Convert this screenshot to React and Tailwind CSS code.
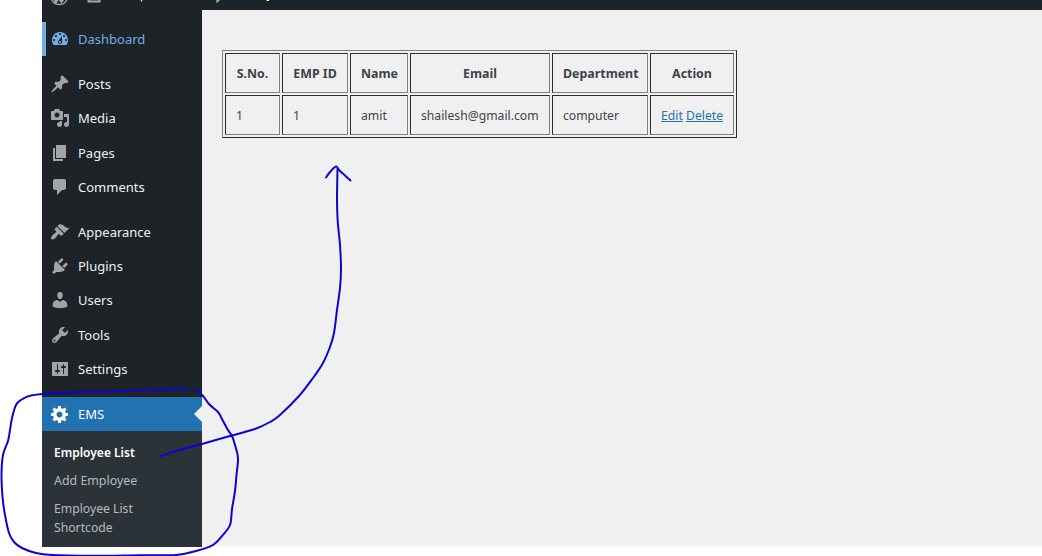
const ICONS = {
  dashboard:
    "M3.76 16h12.48c1.1-1.37 1.76-3.11 1.76-5 0-4.42-3.58-8-8-8s-8 3.58-8 8c0 1.89.66 3.63 1.76 5zM10 4c.55 0 1 .45 1 1s-.45 1-1 1-1-.45-1-1 .45-1 1-1zM6 6c.55 0 1 .45 1 1s-.45 1-1 1-1-.45-1-1 .45-1 1-1zm8 0c.55 0 1 .45 1 1s-.45 1-1 1-1-.45-1-1 .45-1 1-1zm-5.37 5.55L12 7v6c0 1.1-.9 2-2 2s-2-.9-2-2c0-.57.24-1.08.63-1.45zM4 10c.55 0 1 .45 1 1s-.45 1-1 1-1-.45-1-1 .45-1 1-1zm12 0c.55 0 1 .45 1 1s-.45 1-1 1-1-.45-1-1 .45-1 1-1zm-5 3c0-.55-.45-1-1-1s-1 .45-1 1 .45 1 1 1 1-.45 1-1z",
  post: "M10.44 3.02l1.82-1.82 6.36 6.35-1.83 1.82c-1.05-.68-2.48-.57-3.41.36l-.75.75c-.92.93-1.04 2.35-.35 3.41l-1.83 1.82-2.41-2.41-2.8 2.79c-.42.42-3.38 2.71-3.8 2.29s1.86-3.39 2.28-3.81l2.79-2.79L4.1 9.36l1.83-1.82c1.05.69 2.48.57 3.4-.36l.75-.75c.93-.92 1.05-2.35.36-3.41z",
  media:
    "M13 11V4c0-.55-.45-1-1-1h-1.67L9 1H5L3.67 3H2c-.55 0-1 .45-1 1v7c0 .55.45 1 1 1h10c.55 0 1-.45 1-1zM7 4.5c1.38 0 2.5 1.12 2.5 2.5S8.38 9.5 7 9.5 4.5 8.38 4.5 7 5.62 4.5 7 4.5zM14 6h5v10.5c0 1.38-1.12 2.5-2.5 2.5S14 17.88 14 16.5s1.12-2.5 2.5-2.5c.17 0 .34.02.5.05V9h-3V6zm-4 8.05V13h2v3.5c0 1.38-1.12 2.5-2.5 2.5S7 17.88 7 16.5 8.12 14 9.5 14c.17 0 .34.02.5.05z",
  page: "M6 15V2h10v13H6zm-1 1h8v2H3V5h2v11z",
  comments:
    "M5 2h9c1.1 0 2 .9 2 2v7c0 1.1-.9 2-2 2h-2l-5 5v-5H5c-1.1 0-2-.9-2-2V4c0-1.1.9-2 2-2z",
  appearance:
    "M14.48 11.06L7.41 3.99l1.5-1.5c.5-.56 2.3-.47 3.51.32 1.21.8 1.43 1.28 2.91 2.1 1.18.64 2.45 1.26 4.45.85zm-.71.71L6.7 4.7 4.93 6.47c-.39.39-.39 1.02 0 1.41l1.06 1.06c.39.39.39 1.03 0 1.42-.6.6-1.43 1.11-2.21 1.69-.35.26-.7.53-1.01.84C1.43 14.23.4 16.08 1.4 17.07c.99 1 2.84-.03 4.18-1.36.31-.31.58-.66.85-1.02.57-.78 1.08-1.61 1.69-2.21.39-.39 1.02-.39 1.41 0l1.06 1.06c.39.39 1.02.39 1.41 0z",
  plugins:
    "M13.11 4.36L9.87 7.6 8 5.73l3.24-3.24c.35-.34 1.05-.2 1.56.32.52.51.66 1.21.31 1.55zm-8 1.77l.91-1.12 9.01 9.01-1.19.84c-.71.71-2.63 1.16-3.82 1.16H6.14L4.9 17.26c-.59.59-1.54.59-2.12 0-.59-.58-.59-1.53 0-2.12l1.24-1.24v-3.88c0-1.13.4-3.19 1.09-3.89zm7.26 3.97l3.24-3.24c.34-.35 1.04-.21 1.55.31.52.51.66 1.21.31 1.55l-3.24 3.25z",
  users:
    "M10 9.25c-2.27 0-2.73-3.44-2.73-3.44C7 4.02 7.82 2 9.97 2c2.16 0 2.98 2.02 2.71 3.81 0 0-.41 3.44-2.68 3.44zm0 2.57L12.72 10c2.39 0 4.52 2.33 4.52 4.53v2.49s-3.65 1.13-7.24 1.13c-3.65 0-7.24-1.13-7.24-1.13v-2.49c0-2.25 1.94-4.48 4.47-4.48z",
  tools:
    "M16.68 9.77c-1.34 1.34-3.3 1.67-4.95.99l-5.41 6.52c-.99.99-2.59.99-3.58 0s-.99-2.59 0-3.57l6.52-5.42c-.68-1.65-.35-3.61.99-4.95 1.28-1.28 3.12-1.62 4.72-1.06l-2.89 2.89 2.82 2.82 2.86-2.87c.53 1.58.18 3.39-1.08 4.65zM3.81 16.21c.4.39 1.04.39 1.43 0 .4-.4.4-1.04 0-1.43-.39-.4-1.03-.4-1.43 0-.39.39-.39 1.03 0 1.43z",
  settings:
    "M18 16V4c0-.55-.45-1-1-1H3c-.55 0-1 .45-1 1v12c0 .55.45 1 1 1h14c.55 0 1-.45 1-1zM8 11h1c.55 0 1 .45 1 1s-.45 1-1 1H8v1.5c0 .28-.22.5-.5.5s-.5-.22-.5-.5V13H6c-.55 0-1-.45-1-1s.45-1 1-1h1V5.5c0-.28.22-.5.5-.5s.5.22.5.5V11zm5-2h-1c-.55 0-1-.45-1-1s.45-1 1-1h1V5.5c0-.28.22-.5.5-.5s.5.22.5.5V7h1c.55 0 1 .45 1 1s-.45 1-1 1h-1v5.5c0 .28-.22.5-.5.5s-.5-.22-.5-.5V9z",
  generic:
    "M18 12h-2.18c-.17.7-.44 1.35-.81 1.93l1.54 1.54-2.1 2.1-1.54-1.54c-.58.36-1.23.63-1.91.79V19H8v-2.18c-.68-.16-1.33-.43-1.91-.79l-1.54 1.54-2.12-2.12 1.54-1.54c-.36-.58-.63-1.23-.79-1.91H1V9.03h2.17c.16-.7.44-1.35.8-1.94L2.43 5.55l2.1-2.1 1.54 1.54c.58-.37 1.24-.64 1.93-.81V2h3v2.18c.68.16 1.33.43 1.91.79l1.54-1.54 2.12 2.12-1.54 1.54c.36.59.64 1.24.8 1.94H18V12zm-8.5 1.5c1.66 0 3-1.34 3-3s-1.34-3-3-3-3 1.34-3 3 1.34 3 3 3z",
};

const CONTENT_ITEMS = [
  ["post", "Posts"],
  ["media", "Media"],
  ["page", "Pages"],
  ["comments", "Comments"],
];

const ADMIN_ITEMS = [
  ["appearance", "Appearance"],
  ["plugins", "Plugins"],
  ["users", "Users"],
  ["tools", "Tools"],
  ["settings", "Settings"],
];

function MenuItem({ icon, label, className = "text-[#f0f0f1]", iconClass = "text-[#a0a5aa]" }) {
  return (
    <a className={`flex h-[34.3px] shrink-0 items-center pl-2 ${className}`}>
      <svg viewBox="0 0 20 20" className={`size-5 shrink-0 fill-current ${iconClass}`}>
        <path fillRule="evenodd" d={ICONS[icon]} />
      </svg>
      <span className="pl-2 text-[13px] leading-[18px] whitespace-nowrap">{label}</span>
    </a>
  );
}

function Sidebar() {
  return (
    <nav className="flex w-40 shrink-0 flex-col bg-[#1d2327] pt-3">
      <MenuItem
        icon="dashboard"
        label="Dashboard"
        className="text-[#72aee6] shadow-[inset_4px_0_0_#72aee6]"
        iconClass="text-[#72aee6]"
      />
      <div className="mt-[10.7px] flex flex-col">
        {CONTENT_ITEMS.map(([icon, label]) => (
          <MenuItem key={label} icon={icon} label={label} />
        ))}
      </div>
      <div className="mt-[10.4px] flex flex-col">
        {ADMIN_ITEMS.map(([icon, label]) => (
          <MenuItem key={label} icon={icon} label={label} />
        ))}
      </div>
      <div className="relative mt-[11.1px]">
        <MenuItem icon="generic" label="EMS" className="bg-[#2271b1] text-white" iconClass="text-white" />
        <span className="absolute top-[9px] right-0 border-y-8 border-r-8 border-y-transparent border-r-[#f0f0f1]" />
      </div>
      <ul className="flex flex-1 flex-col bg-[#2c3338] pt-[13px] pl-3 text-[12.4px] leading-[18.5px] text-[#b5bbc0]">
        <li className="pb-[9.5px] text-[12px] font-semibold text-white">Employee List</li>
        <li className="pb-[9.5px]">Add Employee</li>
        <li className="w-[110px] text-[12.2px]">Employee List Shortcode</li>
      </ul>
    </nav>
  );
}

const CELL =
  "border border-t-[#2c2c2c] border-l-[#2c2c2c] border-r-[#808080] border-b-[#808080] px-2.5 pt-0.5";

const HEADERS = [
  ["S.No.", "w-[55px]"],
  ["EMP ID", "w-[66px]"],
  ["Name", "w-[58px]"],
  ["Email", "w-[140px]"],
  ["Department", "w-[96px]"],
  ["Action", "w-[84px]"],
];

function EmployeeTable() {
  return (
    <table className="w-[515px] table-fixed border-separate border-spacing-[2px] border border-t-[#808080] border-l-[#808080] border-r-[#2c2c2c] border-b-[#2c2c2c] text-[12.2px] leading-[18px] whitespace-nowrap text-[#3c434a]">
      <thead>
        <tr className="h-10">
          {HEADERS.map(([label, width]) => (
            <th key={label} className={`${CELL} ${width} px-1 text-center text-[12.4px] font-bold`}>
              {label}
            </th>
          ))}
        </tr>
      </thead>
      <tbody>
        <tr className="h-10">
          <td className={CELL}>1</td>
          <td className={CELL}>1</td>
          <td className={CELL}>amit</td>
          <td className={CELL}>shailesh@gmail.com</td>
          <td className={CELL}>computer</td>
          <td className={CELL}>
            <a className="text-[#2271b1] underline">Edit</a> <a className="text-[#2271b1] underline">Delete</a>
          </td>
        </tr>
      </tbody>
    </table>
  );
}

function AdminBar() {
  return (
    <header className="h-2.5 shrink-0 overflow-hidden bg-[#1d2327]">
      <svg viewBox="0 0 1000 10" className="h-2.5 w-[1000px]" fill="none" stroke="#a7aaad">
        <path d="M9.5 -1a8.2 8.2 0 0 0 15.5 0" strokeWidth="1.3" />
        <path d="M12 -1l2 3.5 2 -3.5M17 -1l2.5 3 2 -3" strokeWidth="1.8" />
        <path d="M46.5 0v1.5h11v-1.5" strokeWidth="2" />
        <path d="M99.5 0v1.5" stroke="#f0f0f1" strokeWidth="1.3" />
        <path d="M175 0v2l2.5 -2" strokeWidth="1.3" />
        <path d="M224.5 .5h2.500" stroke="#f0f0f1" />
      </svg>
    </header>
  );
}

const STROKES = [
  [
    [187, 389], [170, 389], [156, 389.5], [122, 391.2], [88, 391.5], [55, 393], [31, 395.5], [21, 400], [16, 405],
    [12, 418], [10, 430], [8, 441], [3, 455], [1.5, 475], [2.5, 497], [5, 515], [9, 533], [14, 542], [22, 548],
    [36, 553], [52, 555], [90, 555.8], [140, 555.3], [176, 555], [196, 551], [213, 545], [222, 536], [230, 525],
    [232, 509], [235, 491], [236.5, 475], [238, 458], [235, 445], [232, 436], [228, 430], [222, 419], [218, 412],
    [209, 404], [203, 396], [195, 388.5],
  ],
  [
    [161, 456], [178, 450.5], [202, 444], [230, 436], [255, 429], [270, 422], [280, 415], [299, 396], [313, 378],
    [323, 363], [330, 347], [334, 333], [337, 310], [340, 288], [341, 269], [340, 245], [337.7, 221], [337, 200],
    [337.5, 169],
  ],
  [
    [326, 177.5], [330, 172], [336, 166.5], [339, 170], [345, 175.5], [350.5, 180.5],
  ],
];

// Catmull-Rom spline through the given points, as cubic segments
function smooth(points) {
  const at = (i) => points[Math.max(0, Math.min(points.length - 1, i))];
  let d = `M${points[0].join(" ")}`;
  for (let i = 0; i < points.length - 1; i++) {
    const [a, b, c, e] = [at(i - 1), at(i), at(i + 1), at(i + 2)];
    d += `C${b[0] + (c[0] - a[0]) / 6} ${b[1] + (c[1] - a[1]) / 6} ${c[0] - (e[0] - b[0]) / 6} ${c[1] - (e[1] - b[1]) / 6} ${c[0]} ${c[1]}`;
  }
  return d;
}

function Annotations() {
  return (
    <svg
      viewBox="0 0 1042 556"
      className="pointer-events-none absolute inset-0 h-[556px] w-[1042px]"
      fill="none"
      stroke="#0d04d0"
      strokeWidth="2"
      strokeLinecap="round"
      strokeLinejoin="round"
    >
      {STROKES.map((points, i) => (
        <path key={i} d={smooth(points)} />
      ))}
    </svg>
  );
}

export default function App() {
  return (
    <div className="relative h-[556px] w-[1042px] overflow-hidden bg-white pl-[42px] font-['Noto_Sans','Open_Sans',sans-serif]">
      <div className="flex h-[547px] flex-col">
        <AdminBar />
        <div className="flex min-h-0 flex-1">
          <Sidebar />
          <main className="min-w-0 flex-1 border-b-2 border-[#f5f5f5] bg-[#f0f0f1] pt-10 pl-5">
            <EmployeeTable />
          </main>
        </div>
      </div>
      <Annotations />
    </div>
  );
}
